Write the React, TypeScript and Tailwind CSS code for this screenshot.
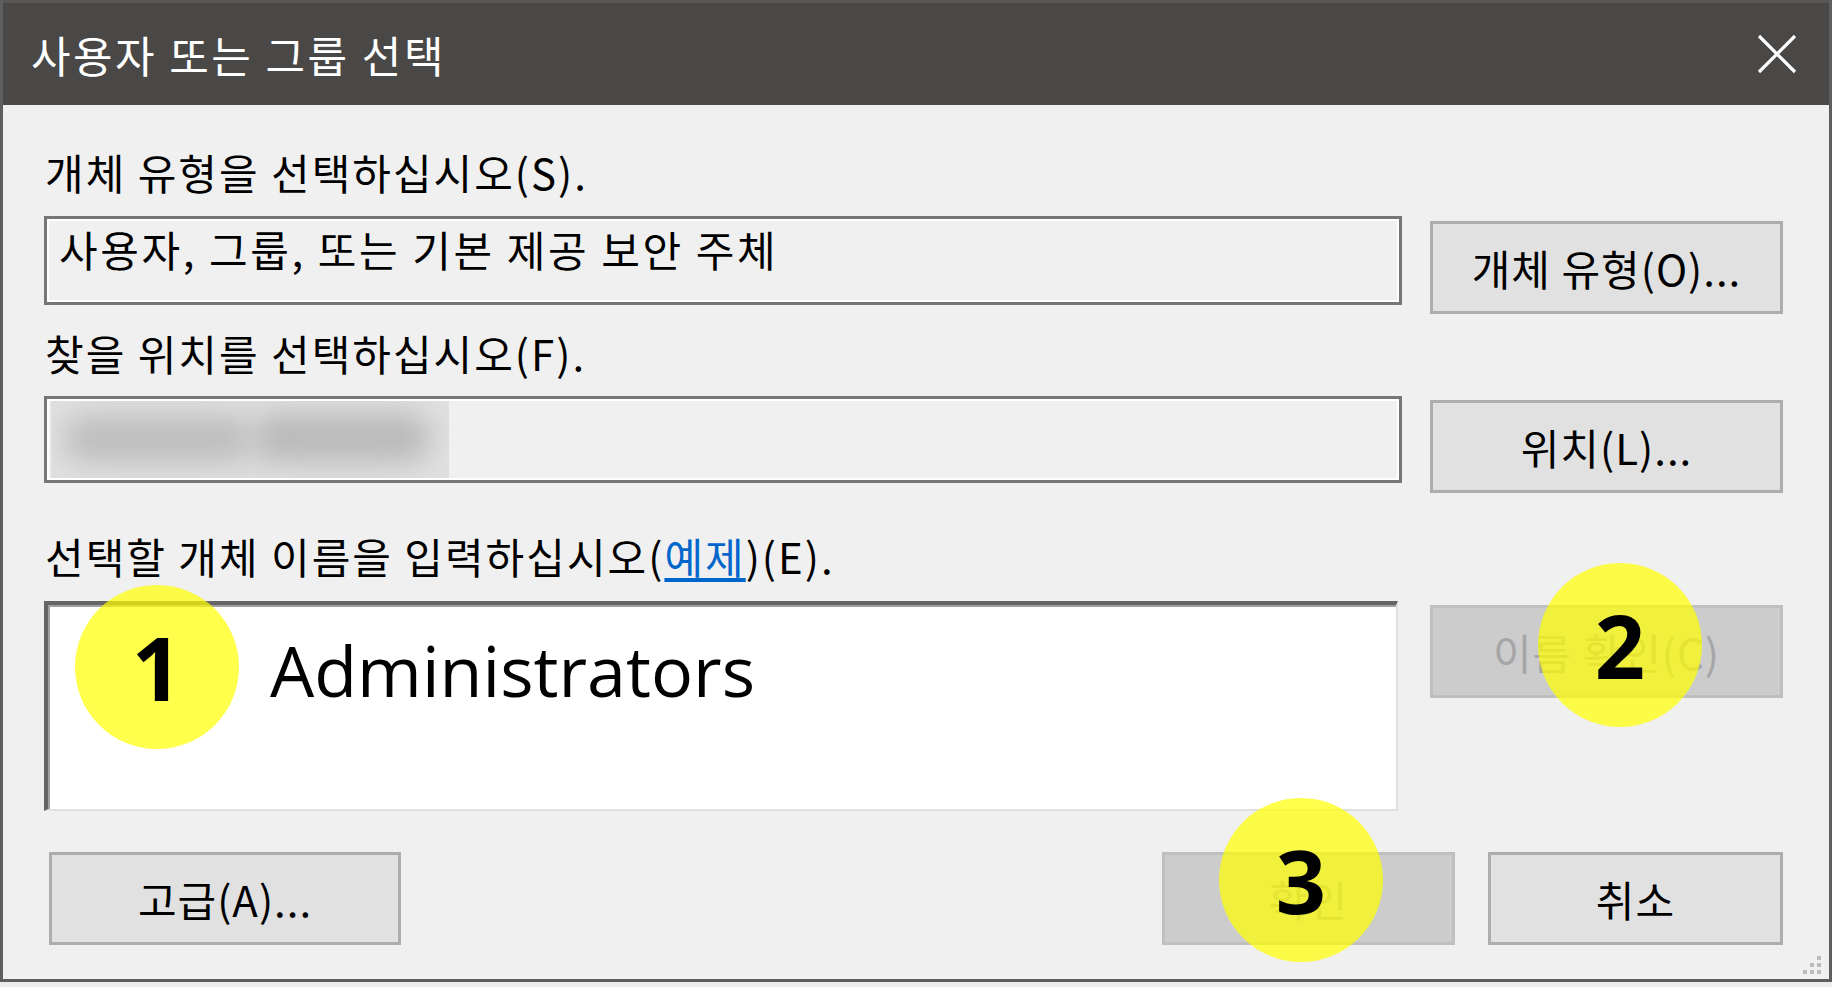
import React from 'react';

const ko = "font-['Noto_Sans_CJK_KR',sans-serif]";

interface WinButtonProps {
    label: string;
    disabled?: boolean;
    className?: string;
}

const WinButton: React.FC<WinButtonProps> = ({ label, disabled, className }) => (
    <div
        className={`flex h-[93px] shrink-0 items-center justify-center border-[3px] text-[42px] leading-[56px] tracking-[1px] ${
            disabled ? 'border-[#bfbfbf] bg-[#cccccc] text-[#a6a6a6]' : 'border-[#adadad] bg-[#e1e1e1] text-black'
        } ${className ?? ''}`}
    >
        {label}
    </div>
);

const Marker: React.FC<{ n: string; className: string }> = ({ n, className }) => (
    <div
        className={`absolute flex h-[164px] w-[164px] items-center justify-center rounded-full bg-[#ffff00]/70 font-['Open_Sans',sans-serif] text-[88px] font-bold leading-none text-black ${className}`}
    >
        {n}
    </div>
);

export default function App() {
    return (
        <div className={`relative h-[987px] w-[1832px] overflow-hidden bg-[#ececec] ${ko}`}>
            <div className="flex h-[982px] flex-col border-x-[3px] border-b-[3px] border-[#5e5e5e]">
                {/* title bar */}
                <div className="flex h-[105px] shrink-0 items-center border-t-[3px] border-[#5a5856] bg-[#4a4846] pl-[28px] pr-[32px]">
                    <span className="text-[43px] leading-[56px] tracking-[2.5px] text-white">사용자 또는 그룹 선택</span>
                    <svg className="ml-auto" width="40" height="40" viewBox="0 0 40 40">
                        <path d="M2 2 L38 38 M38 2 L2 38" stroke="#ffffff" strokeWidth="3.2" />
                    </svg>
                </div>

                {/* body */}
                <div className="relative flex flex-1 flex-col bg-[#f0f0f0] pl-[41px] pr-[46px] pt-[39px] text-[42px] leading-[56px] tracking-[2px] text-black">
                    <div className="pl-[1px]">개체 유형을 선택하십시오(S).</div>
                    <div className="mt-[16px] flex items-start gap-[28px]">
                        <div className="h-[89px] w-[1358px] border-[3px] border-[#767676]">
                            <div className="h-full border-2 border-white bg-[#f0f0f0] pl-[10px] tracking-[2.6px]">
                                사용자, 그룹, 또는 기본 제공 보안 주체
                            </div>
                        </div>
                        <WinButton label="개체 유형(O)..." className="mt-[5px] w-[353px]" />
                    </div>

                    <div className="mt-[11px] pl-[1px]">찾을 위치를 선택하십시오(F).</div>
                    <div className="mt-[15px] flex items-start gap-[28px]">
                        <div className="h-[87px] w-[1358px] border-[3px] border-[#767676]">
                            <div className="flex h-full items-stretch border-2 border-white bg-[#f0f0f0]">
                                <div className="relative ml-[2px] w-[398px] overflow-hidden bg-[#e0e0e0]">
                                    <div className="absolute left-[12px] top-[14px] h-[48px] w-[190px] rounded-full bg-[#bebebe] blur-[14px]" />
                                    <div className="absolute left-[200px] top-[12px] h-[50px] w-[180px] rounded-full bg-[#bababa] blur-[14px]" />
                                </div>
                            </div>
                        </div>
                        <WinButton label="위치(L)..." className="mt-[4px] w-[353px]" />
                    </div>

                    <div className="mt-[35px] pl-[1px]">
                        선택할 개체 이름을 입력하십시오(<span className="text-[#0066cc] underline underline-offset-[4px]">예제</span>)(E).
                    </div>
                    <div className="mt-[17px] flex items-start gap-[28px]">
                        <div className="h-[210px] w-[1354px] border-b-2 border-l-[4px] border-r-2 border-t-[4px] border-b-[#e0e0e0] border-l-[#666666] border-r-[#e0e0e0] border-t-[#666666] bg-white pl-[222px] pt-[18px] tracking-normal shadow-[inset_2px_2px_0_#a0a0a0]">
                            <span className="font-['Open_Sans',sans-serif] text-[70px] leading-[94px]">Administrators</span>
                        </div>
                        <WinButton label="이름 확인(C)" disabled className="ml-[4px] mt-[4px] w-[353px]" />
                    </div>

                    <div className="mt-[41px] flex items-start">
                        <WinButton label="고급(A)..." className="ml-[5px] w-[352px]" />
                        <WinButton label="확인" disabled className="ml-auto w-[293px]" />
                        <WinButton label="취소" className="ml-[33px] w-[295px]" />
                    </div>

                    {/* size grip */}
                    <div className="absolute bottom-[5px] right-[8px] grid grid-cols-3 gap-[3px]">
                        <span className="h-[4px] w-[4px]" />
                        <span className="h-[4px] w-[4px]" />
                        <span className="h-[4px] w-[4px] bg-[#bcbcbc]" />
                        <span className="h-[4px] w-[4px]" />
                        <span className="h-[4px] w-[4px] bg-[#bcbcbc]" />
                        <span className="h-[4px] w-[4px] bg-[#bcbcbc]" />
                        <span className="h-[4px] w-[4px] bg-[#bcbcbc]" />
                        <span className="h-[4px] w-[4px] bg-[#bcbcbc]" />
                        <span className="h-[4px] w-[4px] bg-[#bcbcbc]" />
                    </div>
                </div>
            </div>

            <Marker n="1" className="left-[75px] top-[585px]" />
            <Marker n="2" className="left-[1538px] top-[563px]" />
            <Marker n="3" className="left-[1219px] top-[798px]" />
        </div>
    );
}
